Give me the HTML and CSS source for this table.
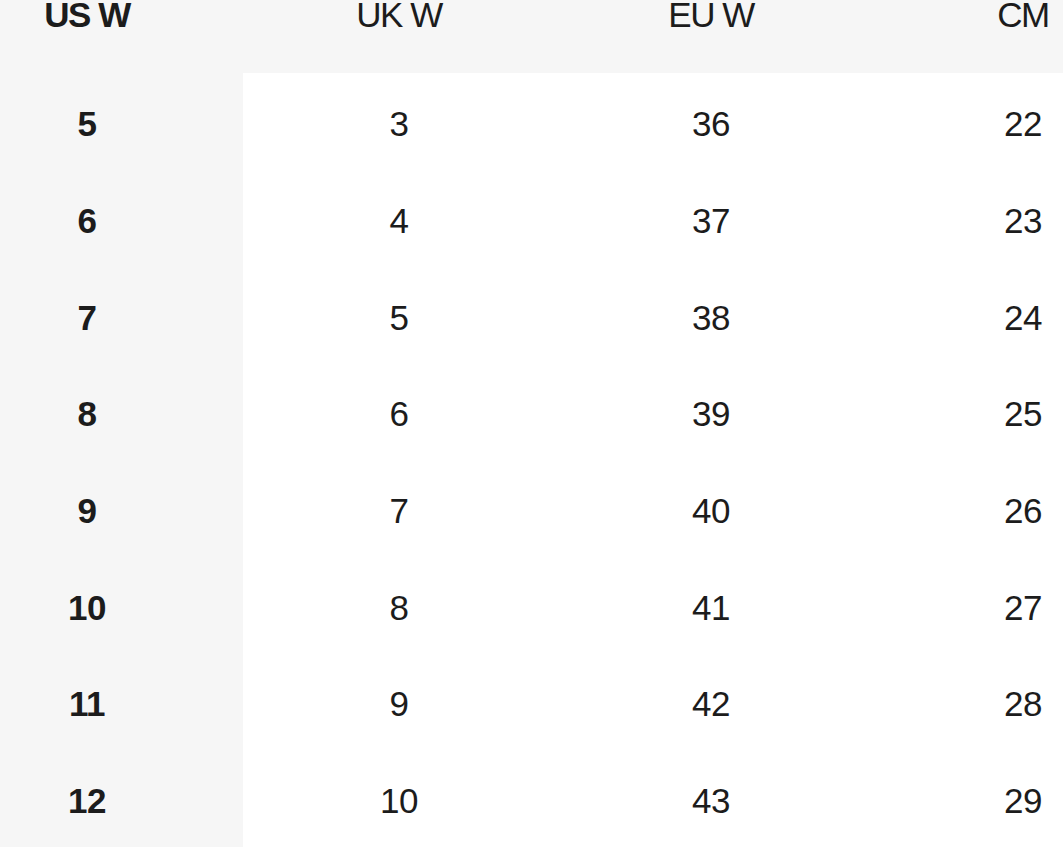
FILE: index.html
```html
<!DOCTYPE html>
<html lang="en">
<head>
<meta charset="utf-8">
<title>Size chart</title>
<link rel="stylesheet" href="styles.css">
</head>
<body>
<div class="chart">
  <div class="row head">
    <div class="cell key">US W</div>
    <div class="cell">UK W</div>
    <div class="cell">EU W</div>
    <div class="cell">CM</div>
  </div>
  <div class="body">
    <div class="row"><div class="cell key">5</div><div class="cell">3</div><div class="cell">36</div><div class="cell">22</div></div>
    <div class="row"><div class="cell key">6</div><div class="cell">4</div><div class="cell">37</div><div class="cell">23</div></div>
    <div class="row"><div class="cell key">7</div><div class="cell">5</div><div class="cell">38</div><div class="cell">24</div></div>
    <div class="row"><div class="cell key">8</div><div class="cell">6</div><div class="cell">39</div><div class="cell">25</div></div>
    <div class="row"><div class="cell key">9</div><div class="cell">7</div><div class="cell">40</div><div class="cell">26</div></div>
    <div class="row"><div class="cell key">10</div><div class="cell">8</div><div class="cell">41</div><div class="cell">27</div></div>
    <div class="row"><div class="cell key">11</div><div class="cell">9</div><div class="cell">42</div><div class="cell">28</div></div>
    <div class="row"><div class="cell key">12</div><div class="cell">10</div><div class="cell">43</div><div class="cell">29</div></div>
  </div>
</div>
</body>
</html>
```

FILE: styles.css
```css
html, body {
  margin: 0;
  padding: 0;
  background: #ffffff;
  overflow: hidden;
}
body {
  width: 1063px;
  height: 847px;
  font-family: "Liberation Sans", Arial, Helvetica, sans-serif;
  color: #1c1c1c;
}
.chart {
  margin-left: -69px;
  width: 1248px;
}
.row {
  display: grid;
  grid-template-columns: 312px 312px 312px 312px;
  align-items: center;
}
.cell {
  text-align: center;
  font-size: 35px;
  letter-spacing: -0.5px;
}
.head {
  height: 73px;
  align-items: start;
  background: #f6f6f6;
}
.head .cell {
  line-height: 30px;
  letter-spacing: -1.5px;
}
.body {
  padding-top: 3px;
  background: linear-gradient(to right, #f6f6f6 312px, #ffffff 312px);
}
.body .row {
  height: 96.7px;
}
.key {
  font-weight: bold;
}
```
